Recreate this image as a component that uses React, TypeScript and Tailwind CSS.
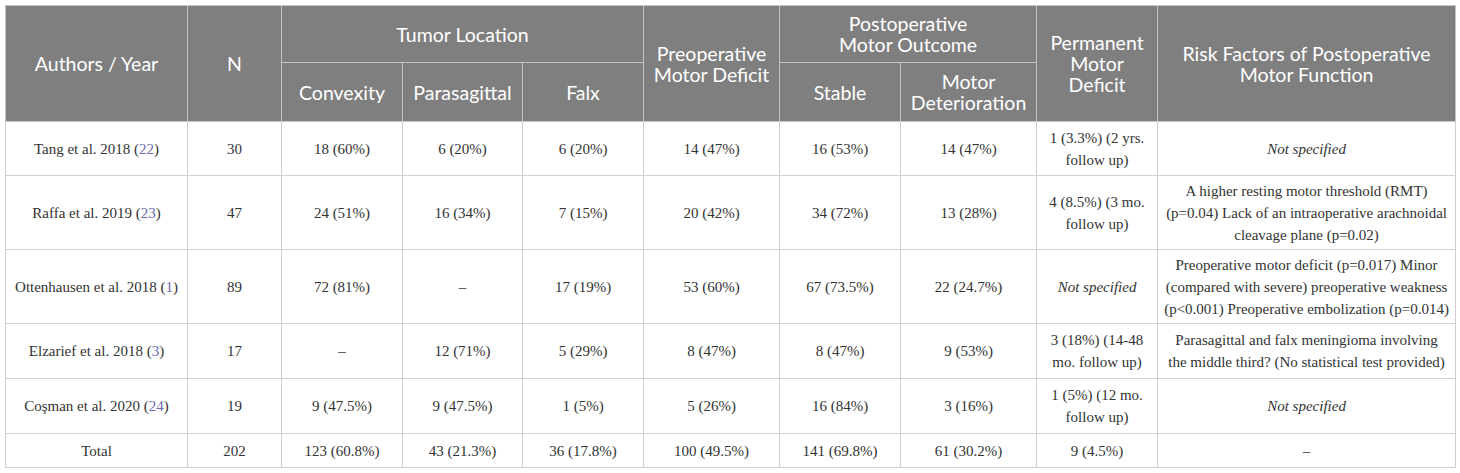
type Row = {
	author: string
	ref: string
	n: string
	convexity: string
	parasagittal: string
	falx: string
	preop: string
	stable: string
	deterioration: string
	permanent: string[]
	risk: string[]
	h: string
}

const rows: Row[] = [
	{
		author: "Tang et al. 2018",
		ref: "22",
		n: "30",
		convexity: "18 (60%)",
		parasagittal: "6 (20%)",
		falx: "6 (20%)",
		preop: "14 (47%)",
		stable: "16 (53%)",
		deterioration: "14 (47%)",
		permanent: ["1 (3.3%) (2 yrs.", "follow up)"],
		risk: [],
		h: "h-[54px]",
	},
	{
		author: "Raffa et al. 2019",
		ref: "23",
		n: "47",
		convexity: "24 (51%)",
		parasagittal: "16 (34%)",
		falx: "7 (15%)",
		preop: "20 (42%)",
		stable: "34 (72%)",
		deterioration: "13 (28%)",
		permanent: ["4 (8.5%) (3 mo.", "follow up)"],
		risk: [
			"A higher resting motor threshold (RMT)",
			"(p=0.04) Lack of an intraoperative arachnoidal",
			"cleavage plane (p=0.02)",
		],
		h: "h-[74px]",
	},
	{
		author: "Ottenhausen et al. 2018",
		ref: "1",
		n: "89",
		convexity: "72 (81%)",
		parasagittal: "–",
		falx: "17 (19%)",
		preop: "53 (60%)",
		stable: "67 (73.5%)",
		deterioration: "22 (24.7%)",
		permanent: [],
		risk: [
			"Preoperative motor deficit (p=0.017) Minor",
			"(compared with severe) preoperative weakness",
			"(p<0.001) Preoperative embolization (p=0.014)",
		],
		h: "h-[74px]",
	},
	{
		author: "Elzarief et al. 2018",
		ref: "3",
		n: "17",
		convexity: "–",
		parasagittal: "12 (71%)",
		falx: "5 (29%)",
		preop: "8 (47%)",
		stable: "8 (47%)",
		deterioration: "9 (53%)",
		permanent: ["3 (18%) (14-48", "mo. follow up)"],
		risk: [
			"Parasagittal and falx meningioma involving",
			"the middle third? (No statistical test provided)",
		],
		h: "h-[55px]",
	},
	{
		author: "Coşman et al. 2020",
		ref: "24",
		n: "19",
		convexity: "9 (47.5%)",
		parasagittal: "9 (47.5%)",
		falx: "1 (5%)",
		preop: "5 (26%)",
		stable: "16 (84%)",
		deterioration: "3 (16%)",
		permanent: ["1 (5%) (12 mo.", "follow up)"],
		risk: [],
		h: "h-[55px]",
	},
]

const th = "border border-[#c4c4c4] px-1 text-center align-middle font-normal"
const td = "border border-[#cfcfcf] px-[6px] text-center align-middle"

const NotSpecified = () => <span className="italic">Not specified</span>

// keeps the line breaks of the source table
const Lines = ({ lines }: { lines: string[] }) => {
	if (!lines.length) return <NotSpecified />
	return (
		<>
			{lines.map((line, i) => (
				<span key={i} className="block whitespace-nowrap">
					{line}
				</span>
			))}
		</>
	)
}

const App = () => {
	return (
		<div className="bg-white p-[5px]">
			<table className="w-[1450px] table-fixed border-collapse border border-[#cfcfcf] font-['Liberation_Serif',serif] text-[15px] leading-[22px] text-[#333]">
				<colgroup>
					<col className="w-[182px]" />
					<col className="w-[94px]" />
					<col className="w-[121px]" />
					<col className="w-[120px]" />
					<col className="w-[121px]" />
					<col className="w-[136px]" />
					<col className="w-[121px]" />
					<col className="w-[136px]" />
					<col className="w-[121px]" />
					<col className="w-[298px]" />
				</colgroup>
				<thead className="bg-[#7f7f7f] font-['Lato',sans-serif] text-[19.5px] leading-[21px] text-white">
					<tr className="h-[57px]">
						<th rowSpan={2} className={th}>Authors / Year</th>
						<th rowSpan={2} className={th}>N</th>
						<th colSpan={3} className={th}>Tumor Location</th>
						<th rowSpan={2} className={th}>
							Preoperative
							<br />
							Motor Deficit
						</th>
						<th colSpan={2} className={th}>
							Postoperative
							<br />
							Motor Outcome
						</th>
						<th rowSpan={2} className={th}>
							Permanent
							<br />
							Motor
							<br />
							Deficit
						</th>
						<th rowSpan={2} className={th}>
							Risk Factors of Postoperative
							<br />
							Motor Function
						</th>
					</tr>
					<tr className="h-[59px]">
						<th className={th}>Convexity</th>
						<th className={th}>Parasagittal</th>
						<th className={th}>Falx</th>
						<th className={th}>Stable</th>
						<th className={th}>
							Motor
							<br />
							Deterioration
						</th>
					</tr>
				</thead>
				<tbody>
					{rows.map((r, i) => (
						<tr key={i} className={r.h}>
							<td className={td}>
								{r.author} (<span className="text-[#6b6bb0]">{r.ref}</span>)
							</td>
							<td className={td}>{r.n}</td>
							<td className={td}>{r.convexity}</td>
							<td className={td}>{r.parasagittal}</td>
							<td className={td}>{r.falx}</td>
							<td className={td}>{r.preop}</td>
							<td className={td}>{r.stable}</td>
							<td className={td}>{r.deterioration}</td>
							<td className={`${td} px-[2px]`}>
								<Lines lines={r.permanent} />
							</td>
							<td className={`${td} px-[2px]`}>
								<Lines lines={r.risk} />
							</td>
						</tr>
					))}
					<tr className="h-[34px]">
						<td className={td}>Total</td>
						<td className={td}>202</td>
						<td className={td}>123 (60.8%)</td>
						<td className={td}>43 (21.3%)</td>
						<td className={td}>36 (17.8%)</td>
						<td className={td}>100 (49.5%)</td>
						<td className={td}>141 (69.8%)</td>
						<td className={td}>61 (30.2%)</td>
						<td className={td}>9 (4.5%)</td>
						<td className={td}>–</td>
					</tr>
				</tbody>
			</table>
		</div>
	)
}

export default App
